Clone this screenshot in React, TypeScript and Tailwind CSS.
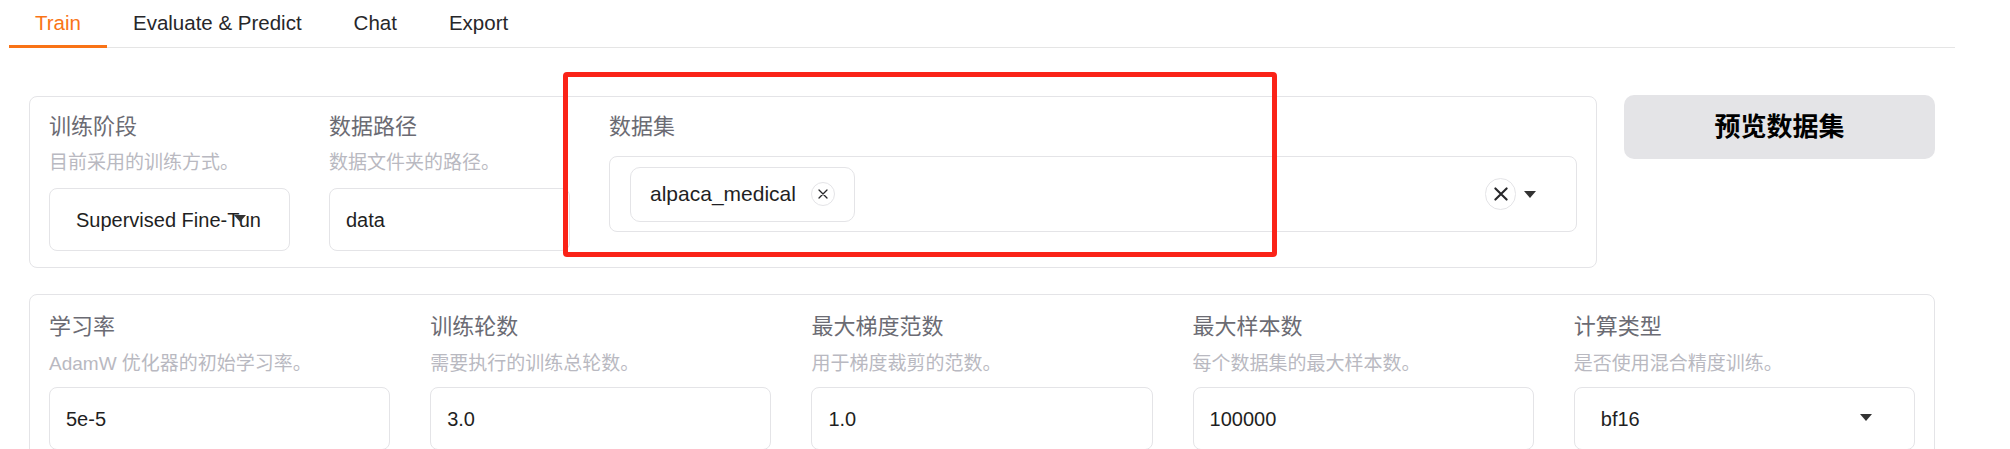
import React from "react";

const FONT = "font-['Liberation_Sans','Noto_Sans_CJK_SC',sans-serif]";

function Caret({ className = "" }: { className?: string }) {
  return (
    <svg className={className} width="12" height="7" viewBox="0 0 12 7">
      <path d="M0 0 L12 0 L6 7 Z" fill="#333" />
    </svg>
  );
}

function Cross({ size = 10, stroke = 1.4 }: { size?: number; stroke?: number }) {
  return (
    <svg width={size} height={size} viewBox="0 0 10 10">
      <path d="M1 1 L9 9 M9 1 L1 9" stroke="#27272a" strokeWidth={stroke} strokeLinecap="round" fill="none" />
    </svg>
  );
}

function FieldLabel({ title, desc, descMt }: { title: string; desc?: string; descMt: string }) {
  return (
    <>
      <div className="text-[22px] leading-[30px] text-[#6b6b73] whitespace-nowrap">{title}</div>
      {desc && (
        <div className={`${descMt} text-[19px] leading-[24px] text-[#b9b9c1] whitespace-nowrap`}>{desc}</div>
      )}
    </>
  );
}

function TextBox({ value, mt }: { value: string; mt: string }) {
  return (
    <div className={`${mt} h-[63px] rounded-[8px] border border-[#e4e4e7] bg-white flex items-center px-[16px] text-[20px] text-[#1f1f23]`}>
      {value}
    </div>
  );
}

function SelectBox({ value, mt, caretRight }: { value: string; mt: string; caretRight: string }) {
  return (
    <div className={`${mt} relative h-[63px] rounded-[8px] border border-[#e4e4e7] bg-white flex items-center pl-[26px] pr-[20px] text-[20px] text-[#1f1f23]`}>
      <div className="whitespace-nowrap">{value}</div>
      <Caret className={`absolute ${caretRight} top-[26px]`} />
    </div>
  );
}

export default function App() {
  const tabs = ["Train", "Evaluate & Predict", "Chat", "Export"];
  const row2 = [
    { t: "学习率", d: "AdamW 优化器的初始学习率。", v: "5e-5" },
    { t: "训练轮数", d: "需要执行的训练总轮数。", v: "3.0" },
    { t: "最大梯度范数", d: "用于梯度裁剪的范数。", v: "1.0" },
    { t: "最大样本数", d: "每个数据集的最大样本数。", v: "100000" },
  ];
  return (
    <div className={`${FONT} relative w-[2010px] h-[449px] overflow-hidden bg-white`}>
      {/* tabs */}
      <div className="ml-[9px] mr-[55px] h-[48px] border-b border-[#e5e5e5] flex">
        {tabs.map((t, i) => (
          <div
            key={t}
            className={`relative h-[47px] flex items-center px-[26px] text-[20.5px] ${i === 0 ? "text-[#f97316]" : "text-[#27272a]"}`}
          >
            {t}
            {i === 0 && <span className="absolute left-0 right-0 bottom-[-1px] h-[3px] bg-[#f97316]" />}
          </div>
        ))}
      </div>

      <div className="px-[29px] pr-[75px]">
        {/* row 1 */}
        <div className="mt-[48px] flex items-start gap-[27px]">
          <div className="flex-1 rounded-[8px] border border-[#e4e4e7] pt-[15px] pb-[16px] px-[19px] flex gap-[39px]">
            <div className="w-[241px]">
              <FieldLabel title="训练阶段" desc="目前采用的训练方式。" descMt="mt-[9px]" />
              <SelectBox value="Supervised Fine-Tun" mt="mt-[13px]" caretRight="right-[43px]" />
            </div>
            <div className="w-[241px]">
              <FieldLabel title="数据路径" desc="数据文件夹的路径。" descMt="mt-[9px]" />
              <TextBox value="data" mt="mt-[13px]" />
            </div>
            <div className="flex-1">
              <FieldLabel title="数据集" descMt="" />
              <div className="mt-[14px] h-[76px] rounded-[8px] border border-[#e4e4e7] flex items-center pl-[20px] pr-[40px]">
                <div className="h-[55px] rounded-[10px] border border-[#e4e4e7] flex items-center pl-[19px] pr-[19px] gap-[15px] text-[21px] text-[#1f1f23]">
                  <span>alpaca_medical</span>
                  <span className="w-[24px] h-[24px] rounded-full border border-[#e4e4e7] flex items-center justify-center">
                    <Cross size={10} stroke={1.3} />
                  </span>
                </div>
                <div className="flex-1" />
                <span className="w-[31px] h-[32px] rounded-full border border-[#e4e4e7] flex items-center justify-center">
                  <Cross size={14} stroke={1.5} />
                </span>
                <Caret className="ml-[8px]" />
              </div>
            </div>
          </div>
          <div className="w-[311px] h-[64px] mt-[-1px] rounded-[10px] bg-[#e4e4e7] flex items-center justify-center text-[26px] font-bold text-black">
            预览数据集
          </div>
        </div>

        {/* row 2 */}
        <div className="mt-[26px] rounded-[8px] border border-[#e4e4e7] pt-[17px] pb-[16px] px-[19px] grid grid-cols-5 gap-[40px]">
          {row2.map((c) => (
            <div key={c.t}>
              <FieldLabel title={c.t} desc={c.d} descMt="mt-[10px]" />
              <TextBox value={c.v} mt="mt-[11px]" />
            </div>
          ))}
          <div>
            <FieldLabel title="计算类型" desc="是否使用混合精度训练。" descMt="mt-[10px]" />
            <SelectBox value="bf16" mt="mt-[11px]" caretRight="right-[42px]" />
          </div>
        </div>
      </div>

      {/* annotation */}
      <div className="absolute left-[563px] top-[72px] w-[714px] h-[185px] border-[5px] border-[#fa2318] rounded-[4px] pointer-events-none" />
    </div>
  );
}
